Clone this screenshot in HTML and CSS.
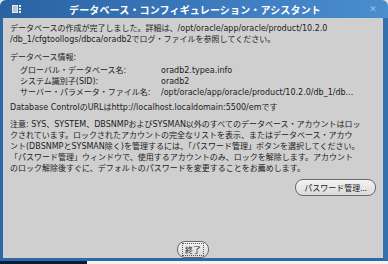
FILE: index.html
```html
<!DOCTYPE html>
<html lang="ja">
<head>
<meta charset="UTF-8">
<title>データベース・コンフィギュレーション・アシスタント</title>
<link rel="stylesheet" href="styles.css">
</head>
<body>

<div class="window">
  <div class="titlebar">
    <svg class="app-icon" width="10" height="10" viewBox="0 0 10 10">
      <rect x="0" y="1" width="6" height="8" fill="#e8e8e8"/>
      <rect x="1" y="2" width="4" height="6" fill="#b8c4d0"/>
      <rect x="7" y="1" width="2" height="2" fill="#f0f0f0"/>
      <rect x="7" y="4" width="2" height="2" fill="#f0f0f0"/>
      <rect x="7" y="7" width="2" height="2" fill="#f0f0f0"/>
    </svg>
    <div class="title">データベース・コンフィギュレーション・アシスタント</div>
    <div class="close">&#x2715;</div>
  </div>

  <div class="frame">
    <div class="content">
      <p class="para">データベースの作成が完了しました。詳細は、/opt/oracle/app/oracle/product/10.2.0<br>/db_1/cfgtoollogs/dbca/oradb2でログ・ファイルを参照してください。</p>

      <p class="info-head">データベース情報:</p>
      <div class="info">
        <span>グローバル・データベース名:</span><span>oradb2.typea.info</span>
        <span>システム識別子(SID):</span><span>oradb2</span>
        <span>サーバー・パラメータ・ファイル名:</span><span>/opt/oracle/app/oracle/product/10.2.0/db_1/db...</span>
      </div>

      <p class="para url">Database ControlのURLはhttp://localhost.localdomain:5500/emです</p>

      <p class="para notes">注意: SYS、SYSTEM、DBSNMPおよびSYSMAN以外のすべてのデータベース・アカウントはロッ<br>クされています。ロックされたアカウントの完全なリストを表示、またはデータベース・アカウ<br>ント(DBSNMPとSYSMAN除く)を管理するには、「パスワード管理」ボタンを選択してください。<br>「パスワード管理」ウィンドウで、使用するアカウントのみ、ロックを解除します。アカウント<br>のロック解除後すぐに、デフォルトのパスワードを変更することをお薦めします。</p>

      <div class="btn-row">
        <button class="btn">パスワード管理...</button>
      </div>
    </div>

    <div class="footer">
      <button class="btn"><span class="focus">終了</span></button>
    </div>
  </div>
</div>
<div class="taskbar"><div class="task"></div></div>

</body>
</html>
```

FILE: styles.css
```css
html, body {
  margin: 0;
  padding: 0;
  background-color: #e4e4e4;
}

body {
  width: 388px;
  height: 264px;
  overflow: hidden;
  font-family: "DejaVu Sans", "Noto Sans CJK JP", sans-serif;
  font-size: 8px;
  color: #1c1c1c;
}

.window {
  height: 261px;
  display: flex;
  flex-direction: column;
  border-radius: 6px 6px 0 0;
  overflow: hidden;
}

.titlebar {
  height: 18px;
  flex: none;
  display: flex;
  align-items: center;
  background: linear-gradient(100deg, #2a62a2 0%, #3a78bb 50%, #4a8ed0 100%);
  color: #fff;
}

.app-icon {
  margin-left: 12px;
}

.title {
  flex: 1;
  text-align: center;
  font-family: "Noto Sans CJK JP", sans-serif;
  font-weight: bold;
  font-size: 10px;
  letter-spacing: 0.15px;
  margin-left: 10px;
}

.close {
  width: 30px;
  text-align: center;
  color: #9cc0e2;
  font-size: 9px;
  font-weight: bold;
}

.frame {
  flex: 1;
  display: flex;
  flex-direction: column;
  background-color: #cfcfcf;
  border-left: 3px solid #2e67a6;
  border-right: 5px solid #3470ae;
  border-bottom: 3px solid #2f68a5;
}

.content {
  padding: 5px 7px 0 7px;
}

.para {
  margin: 0;
  line-height: 11px;
}

.info-head {
  margin: 7px 0 0 0;
  line-height: 11px;
}

.info {
  display: grid;
  grid-template-columns: 141px 1fr;
  margin-top: 2px;
  padding-left: 10px;
  line-height: 11px;
}

.url {
  margin-top: 4px;
}

.notes {
  margin-top: 6px;
}

.btn-row {
  display: flex;
  justify-content: flex-end;
  margin-top: 5px;
}

.btn {
  font-family: "Noto Sans CJK JP", sans-serif;
  font-size: 8px;
  color: #1c1c1c;
  height: 17px;
  padding: 0 8px;
  border: 1px solid #6a6a6a;
  border-radius: 8px;
  background: linear-gradient(#f4f4f4, #dadada);
}

.footer {
  margin-top: auto;
  text-align: center;
}

.footer .btn {
  padding: 0 4px;
}

.focus {
  border: 1px dotted #555;
  padding: 0 2px;
}

.taskbar {
  height: 3px;
  background-color: #f2f2f2;
}

.task {
  width: 87px;
  height: 3px;
  background-color: #0c1a3a;
}
```
